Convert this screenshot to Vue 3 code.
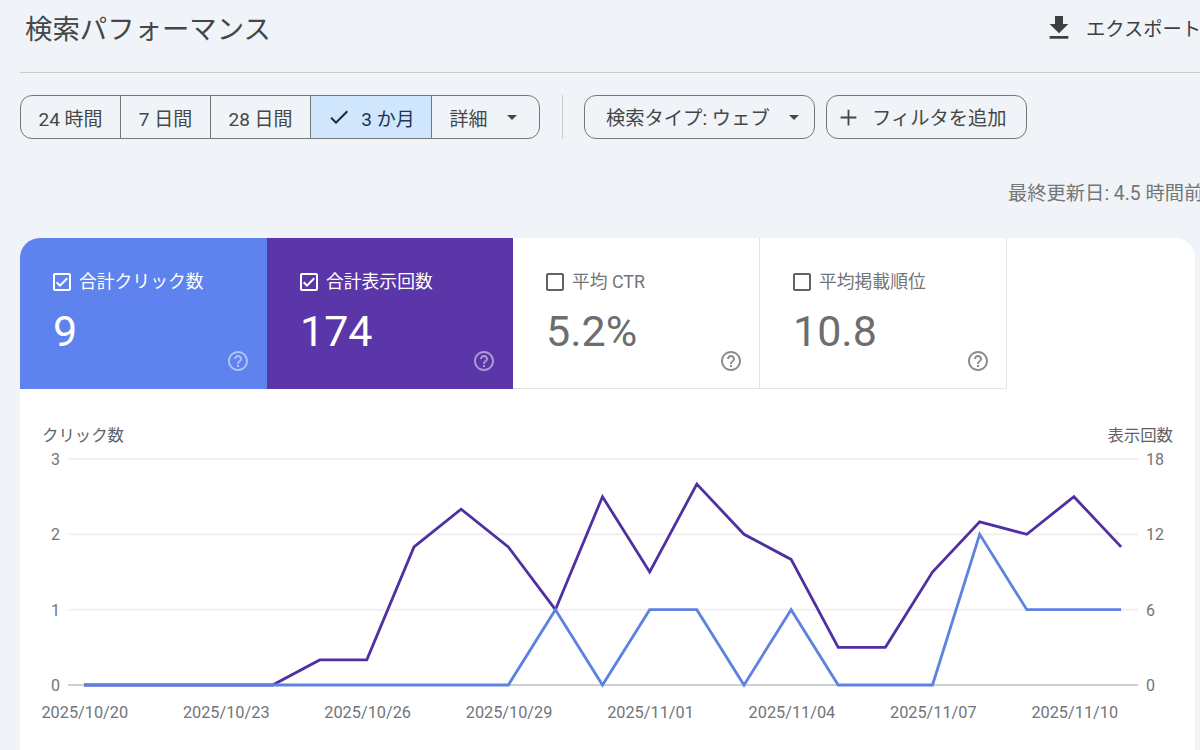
<script setup>
const ranges = [
  { label: '24 時間' },
  { label: '7 日間' },
  { label: '28 日間' },
  { label: '3 か月', selected: true },
  { label: '詳細', caret: true }
]
const tiles = [
  { label: '合計クリック数', value: '9', cls: 'blue', checked: true },
  { label: '合計表示回数', value: '174', cls: 'purple', checked: true },
  { label: '平均 CTR', value: '5.2%', cls: 'plain', checked: false },
  { label: '平均掲載順位', value: '10.8', cls: 'plain', checked: false }
]
const clicks = [0,0,0,0,0,0,0,0,0,0,1,0,1,1,0,1,0,0,0,2,1,1,1]
const impressions = [0,0,0,0,0,2,2,11,14,11,6,15,9,16,12,10,3,3,9,13,12,15,11]
const x0 = 84
const stepX = 47.14
const yTop = 459
const yBase = 685
const h = yBase - yTop
const xAt = i => x0 + i * stepX
const toPoints = (arr, max) =>
  arr.map((v, i) => `${xAt(i).toFixed(1)},${(yBase - (v / max) * h).toFixed(1)}`).join(' ')
const clickPoints = toPoints(clicks, 3)
const impressionPoints = toPoints(impressions, 18)
const gridRows = [
  { left: '3', right: '18', y: yTop },
  { left: '2', right: '12', y: yTop + h / 3 },
  { left: '1', right: '6', y: yTop + (2 * h) / 3 }
]
const dates = [
  ['2025/10/20', 0], ['2025/10/23', 3], ['2025/10/26', 6], ['2025/10/29', 9],
  ['2025/11/01', 12], ['2025/11/04', 15], ['2025/11/07', 18], ['2025/11/10', 21]
]
</script>

<template>
  <div class="page">
    <header class="head">
      <h1 class="title">検索パフォーマンス</h1>
      <div class="export">
        <svg class="dl" viewBox="0 0 24 24" width="32" height="32"><path d="M19 9h-4V3H9v6H5l7 7 7-7zM5 18v2h14v-2H5z" /></svg>
        <span>エクスポート</span>
      </div>
    </header>

    <div class="filters">
      <div class="segments">
        <div v-for="r in ranges" :key="r.label" class="seg" :class="{ selected: r.selected }">
          <svg v-if="r.selected" class="check" viewBox="0 0 24 24" width="24" height="24"><path d="M9 16.17L4.83 12l-1.42 1.41L9 19 21 7l-1.41-1.41z" /></svg>
          <span>{{ r.label }}</span>
          <svg v-if="r.caret" class="caret" viewBox="0 0 24 24" width="24" height="24"><path d="M7 10l5 5 5-5z" /></svg>
        </div>
      </div>
      <div class="sep"></div>
      <div class="chip type">
        <span>検索タイプ: ウェブ</span>
        <svg class="caret" viewBox="0 0 24 24" width="24" height="24"><path d="M7 10l5 5 5-5z" /></svg>
      </div>
      <div class="chip add">
        <svg class="plus" viewBox="0 0 24 24" width="27" height="27"><path d="M19 12.8h-6.2V19h-1.6v-6.2H5v-1.6h6.2V5h1.6v6.2H19z" /></svg>
        <span>フィルタを追加</span>
      </div>
    </div>

    <div class="updated"><span>最終更新日: 4.5 時間前</span></div>

    <section class="card">
      <div class="tiles">
        <div v-for="t in tiles" :key="t.label" class="tile" :class="t.cls">
          <div class="tile-label">
            <svg class="box" viewBox="0 0 24 24" width="24" height="24">
              <path v-if="t.checked" d="M19 3H5c-1.11 0-2 .9-2 2v14c0 1.1.89 2 2 2h14c1.11 0 2-.9 2-2V5c0-1.1-.89-2-2-2zm0 16H5V5h14v14zM17.99 9l-1.41-1.42-6.59 6.59-2.58-2.57-1.42 1.41 4 3.99z" />
              <path v-else d="M19 5v14H5V5h14m0-2H5c-1.1 0-2 .9-2 2v14c0 1.1.9 2 2 2h14c1.1 0 2-.9 2-2V5c0-1.1-.9-2-2-2z" />
            </svg>
            <span>{{ t.label }}</span>
          </div>
          <div class="tile-value">{{ t.value }}</div>
          <svg class="help" viewBox="0 0 24 24" width="24" height="24"><path d="M11 18h2v-2h-2v2zm1-16C6.48 2 2 6.48 2 12s4.48 10 10 10 10-4.48 10-10S17.52 2 12 2zm0 18c-4.41 0-8-3.59-8-8s3.59-8 8-8 8 3.59 8 8-3.59 8-8 8zm0-14c-2.21 0-4 1.79-4 4h2c0-1.1.9-2 2-2s2 .9 2 2c0 2-3 1.75-3 5h2c0-2.25 3-2.5 3-5 0-2.21-1.79-4-4-4z" /></svg>
        </div>
      </div>

      <svg class="chart" viewBox="20 389 1175 361" width="1175" height="361">
        <text x="42" y="441" class="axis-title">クリック数</text>
        <text x="1173" y="441" text-anchor="end" class="axis-title">表示回数</text>

        <g v-for="g in gridRows" :key="g.left">
          <line x1="68" :x2="1138" :y1="g.y" :y2="g.y" class="grid" />
          <text x="60" :y="g.y + 6" text-anchor="end" class="tick">{{ g.left }}</text>
          <text x="1146" :y="g.y + 6" class="tick">{{ g.right }}</text>
        </g>
        <line x1="68" x2="1138" :y1="yBase" :y2="yBase" class="base" />
        <text x="60" :y="yBase + 6" text-anchor="end" class="tick">0</text>
        <text x="1146" :y="yBase + 6" class="tick">0</text>

        <text v-for="d in dates" :key="d[0]" :x="xAt(d[1]) + 0.8" y="718" text-anchor="middle" class="tick date">{{ d[0] }}</text>

        <polyline :points="impressionPoints" class="line l-imp" />
        <polyline :points="clickPoints" class="line l-click" />
      </svg>
    </section>
  </div>
</template>

<style>
html, body { margin: 0; background: #f0f4f9; }
</style>

<style scoped>
.page {
  width: 1200px;
  height: 750px;
  overflow: hidden;
  background: #f0f4f9;
  font-family: Roboto, "Noto Sans CJK JP", sans-serif;
  color: #444746;
  box-sizing: border-box;
  padding-left: 20px;
}
.head {
  height: 73px;
  box-sizing: border-box;
  border-bottom: 1px solid #c7c9cc;
  display: flex;
  align-items: flex-start;
  justify-content: space-between;
  width: 1180px;
}
.title {
  margin: 10px 0 0 5px;
  font-size: 27.4px;
  line-height: 40px;
  font-weight: 400;
  color: #444746;
}
.export {
  display: flex;
  align-items: center;
  gap: 11px;
  flex: none;
  width: 157px;
  height: 32px;
  margin-top: 12px;
  font-size: 19.3px;
  color: #3c4043;
  white-space: nowrap;
}
.dl { fill: #3c4043; flex: none; }
.filters {
  display: flex;
  align-items: center;
  margin-top: 22px;
  height: 44px;
}
.segments {
  display: grid;
  grid-template-columns: 100px 90px 100px 121px 109px;
  height: 44px;
  box-sizing: border-box;
  border: 1px solid #747775;
  border-radius: 12px;
  overflow: hidden;
  width: 520px;
}
.seg {
  display: flex;
  align-items: center;
  justify-content: center;
  font-size: 19px;
  color: #444746;
  border-right: 1px solid #747775;
}
.seg:last-child { border-right: 0; }
.seg.selected {
  background: #cfe6fc;
  color: #1d3557;
  gap: 10px;
}
.check { fill: #1f2a37; flex: none; }
.caret { fill: #444746; flex: none; margin-left: 12px; }
.sep {
  width: 1px;
  height: 44px;
  background: #c7c9cc;
  margin: 0 21px 0 22px;
}
.chip {
  display: flex;
  align-items: center;
  height: 44px;
  box-sizing: border-box;
  border: 1px solid #747775;
  border-radius: 12px;
  font-size: 19.3px;
  color: #444746;
  white-space: nowrap;
}
.type {
  width: 231px;
  padding-left: 21px;
  margin-right: 11px;
}
.add {
  width: 201px;
  padding-left: 8px;
  gap: 10px;
}
.plus { fill: #444746; flex: none; }
.updated {
  margin-top: 41px;
  height: 28px;
  width: 1180px;
  padding-left: 988px;
  box-sizing: border-box;
  font-size: 19.3px;
  line-height: 28px;
  color: #747775;
  white-space: nowrap;
}
.card {
  margin-top: 30px;
  width: 1175px;
  height: 540px;
  background: #fff;
  border-radius: 20px 20px 0 0;
  overflow: hidden;
}
.tiles {
  display: grid;
  grid-template-columns: 247px 246px 247px 247px;
  width: 987px;
  height: 151px;
}
.tile {
  position: relative;
  box-sizing: border-box;
  padding: 32px 0 0 30px;
}
.tile.blue { background: #5e82ee; color: #fff; }
.tile.purple { background: #5b36a8; color: #fff; }
.tile.plain {
  background: #fff;
  color: #70757a;
  border-right: 1px solid #e3e3e3;
  border-bottom: 1px solid #e3e3e3;
}
.tile-label {
  display: flex;
  align-items: center;
  gap: 5px;
  height: 24px;
  font-size: 17.8px;
  line-height: 24px;
  white-space: nowrap;
}
.box { fill: currentColor; flex: none; }
.tile.plain .box { fill: #5f6368; }
.tile-value {
  margin: 12px 0 0 3px;
  font-size: 43px;
  line-height: 50px;
}
.tile.plain .tile-value { color: #6b6e70; }
.help {
  position: absolute;
  right: 17px;
  bottom: 16px;
  fill: rgba(255, 255, 255, 0.5);
}
.tile.plain .help { fill: #8a8d90; right: 16px; bottom: 15px; }
.chart { display: block; }
.axis-title { font-size: 16.4px; fill: #5f6368; }
.tick { font-size: 16px; fill: #70757a; }
.date { font-size: 16.3px; }
.grid { stroke: #f0f0f2; stroke-width: 2; }
.base { stroke: #9aa0a6; stroke-width: 1; }
.line { fill: none; stroke-width: 2.8; stroke-linejoin: miter; }
.l-imp { stroke: #5030a0; }
.l-click { stroke: #5e82e0; }
</style>
